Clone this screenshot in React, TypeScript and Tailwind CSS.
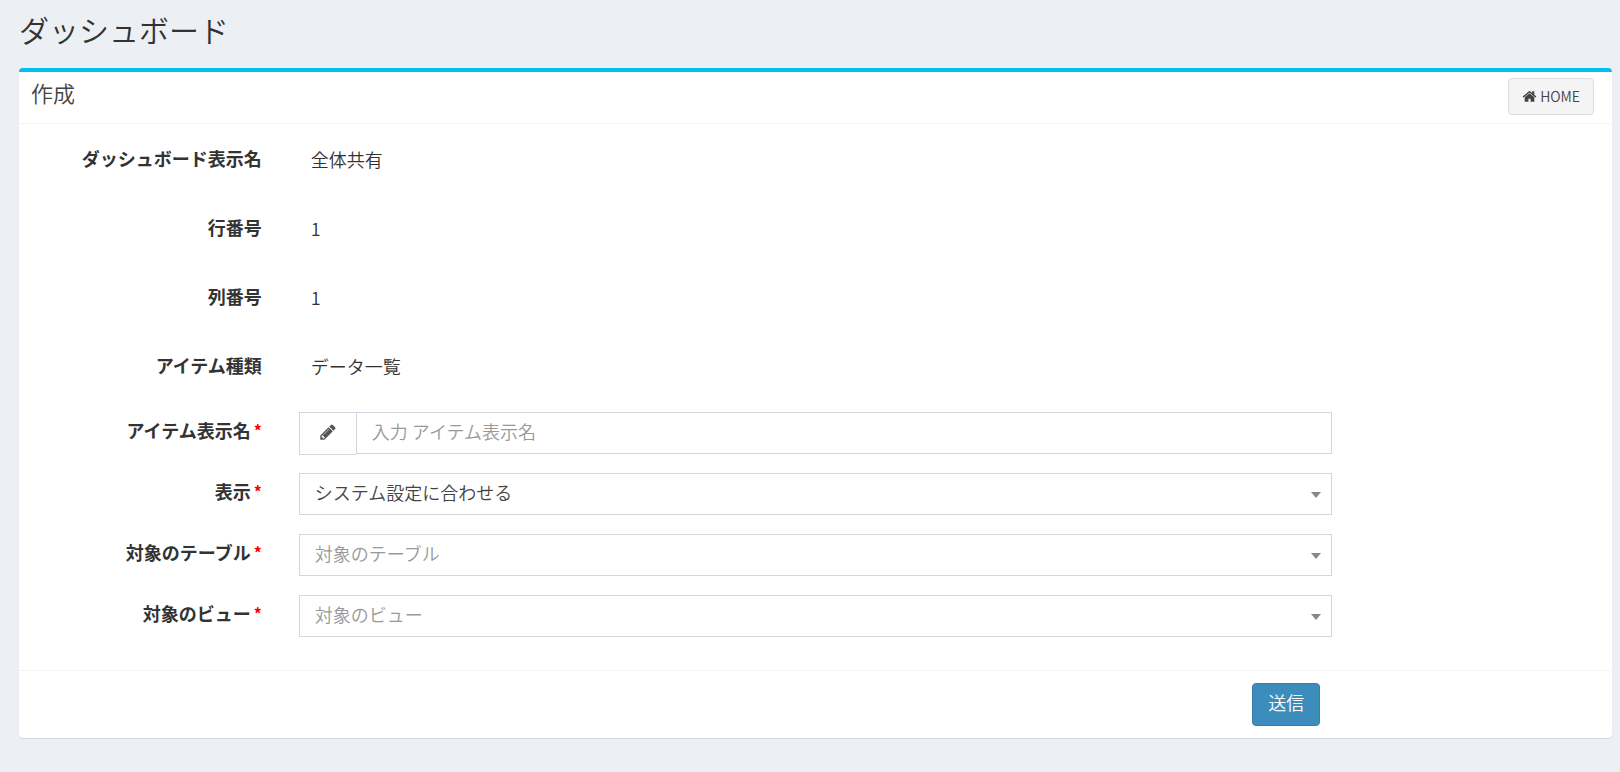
import type { ReactNode } from "react";

type RowProps = {
  label: string;
  htmlFor: string;
  required?: boolean;
  plain?: boolean;
  children: ReactNode;
};

function HomeIcon() {
  return (
    <svg viewBox="0 0 1792 1792" className="size-[15px] fill-current" aria-hidden="true">
      <path d="M1472 992v480q0 26-19 45t-45 19h-384v-384h-256v384h-384q-26 0-45-19t-19-45v-480q0-1 .5-3t.5-3l575-474 575 474q1 2 1 6zm223-69l-62 74q-8 9-21 11h-3q-13 0-21-7l-692-577-692 577q-12 8-24 7-13-2-21-11l-62-74q-8-10-7-23.5t11-21.5l719-599q32-26 76-26t76 26l244 204v-195q0-14 9-23t23-9h192q14 0 23 9t9 23v408l219 182q10 8 11 21.5t-7 23.5z" />
    </svg>
  );
}

function PencilIcon() {
  return (
    <svg viewBox="0 0 1792 1792" className="size-[18px] fill-current" aria-hidden="true">
      <path d="M491 1536l91-91-235-235-91 91v107h128v128h107zm523-928q0-22-22-22-10 0-17 7l-542 542q-7 7-7 17 0 22 22 22 10 0 17-7l542-542q7-7 7-17zm-54-192l416 416-832 832h-416v-416zm683 96q0 53-37 90l-166 166-416-416 166-165q36-38 90-38 53 0 91 38l235 234q37 39 37 91z" />
    </svg>
  );
}

function FieldRow({ label, htmlFor, required, plain, children }: RowProps) {
  return (
    <div className="grid grid-cols-12">
      <label
        htmlFor={htmlFor}
        className={`col-span-2 flex items-start justify-end gap-[3px] pr-[18px] leading-[25px] font-bold ${
          plain ? "pt-2.5" : "pt-1.5"
        }`}
      >
        {label}
        {required && <span className="text-[16px] text-[#ff0000]">*</span>}
      </label>
      <div className="col-span-8 px-[19px]">{children}</div>
    </div>
  );
}

function StaticRow({ label, id, value }: { label: string; id: string; value: string }) {
  return (
    <FieldRow label={label} htmlFor={id} plain>
      <output id={id} className="block min-h-[50px] px-3 pt-[11px] leading-[25px]">
        {value}
      </output>
    </FieldRow>
  );
}

type SelectRowProps = {
  label: string;
  id: string;
  option: string;
  empty?: boolean;
};

function SelectRow({ label, id, option, empty }: SelectRowProps) {
  return (
    <FieldRow label={label} htmlFor={id} required>
      <div className="relative">
        <select
          id={id}
          className={`block h-[42px] w-full appearance-none rounded-none border border-[#d2d6de] bg-white pr-8 pb-1 pl-[15px] outline-none ${
            empty ? "text-[#999]" : "text-[#444]"
          }`}
        >
          <option>{option}</option>
        </select>
        <svg
          viewBox="0 0 10 6"
          className="pointer-events-none absolute top-[19px] right-[11px] h-1.5 w-2.5 fill-[#888]"
          aria-hidden="true"
        >
          <path d="M0 0h10L5 6z" />
        </svg>
      </div>
    </FieldRow>
  );
}

export default function App() {
  return (
    <div className="min-h-screen bg-[#ecf0f5] pr-2 pb-8 pl-[19px] font-['Noto_Sans_CJK_JP',sans-serif] text-[18px] font-[350] text-[#333]">
      <h1 className="pt-[13px] pb-[22px] text-[30px] leading-[33px]">ダッシュボード</h1>

      <main className="rounded-[4px] border-t-4 border-[#00c0ef] bg-white shadow-[0_1px_1px_rgba(0,0,0,0.1)]">
        <header className="flex items-start justify-between border-b border-[#f4f4f4] pt-1.5 pr-[18px] pb-2 pl-3">
          <h2 className="pt-0.5 text-[22px] leading-6 text-[#444]">作成</h2>
          <a
            href="#home"
            className="flex items-center gap-[3px] rounded-[4px] border border-[#ddd] bg-[#f4f4f4] px-[13px] py-[7px] text-[14px] leading-[21px] text-[#444]"
          >
            <HomeIcon />
            HOME
          </a>
        </header>

        <form>
          <div className="-mx-[7px] flex flex-col gap-[19px] pt-3 pb-[33px]">
            <StaticRow label="ダッシュボード表示名" id="dashboard-name" value="全体共有" />
            <StaticRow label="行番号" id="row-no" value="1" />
            <StaticRow label="列番号" id="column-no" value="1" />
            <StaticRow label="アイテム種類" id="item-type" value="データ一覧" />

            <FieldRow label="アイテム表示名" htmlFor="item-name" required>
              <div className="flex h-[42px] items-start">
                <span className="flex h-[43px] w-[57px] items-center justify-center border border-r-0 border-[#d2d6de] pb-1 text-[#555]">
                  <PencilIcon />
                </span>
                <input
                  id="item-name"
                  type="text"
                  placeholder="入力 アイテム表示名"
                  className="h-[42px] min-w-0 flex-1 border border-[#d2d6de] bg-white px-[15px] pb-1 text-[#555] outline-none placeholder:text-[#999]"
                />
              </div>
            </FieldRow>
            <SelectRow label="表示" id="display" option="システム設定に合わせる" />
            <SelectRow label="対象のテーブル" id="table" option="対象のテーブル" empty />
            <SelectRow label="対象のビュー" id="view" option="対象のビュー" empty />
          </div>

          <footer className="border-t border-[#f4f4f4] py-3">
            <div className="-mx-[7px] grid grid-cols-12">
              <div className="col-span-8 col-start-3 flex justify-end px-[31px]">
                <button
                  type="submit"
                  className="rounded-[4px] border border-[#367fa9] bg-[#3c8dbc] px-[15px] pt-1.5 pb-2.5 leading-[25px] text-white"
                >
                  送信
                </button>
              </div>
            </div>
          </footer>
        </form>
      </main>
    </div>
  );
}
